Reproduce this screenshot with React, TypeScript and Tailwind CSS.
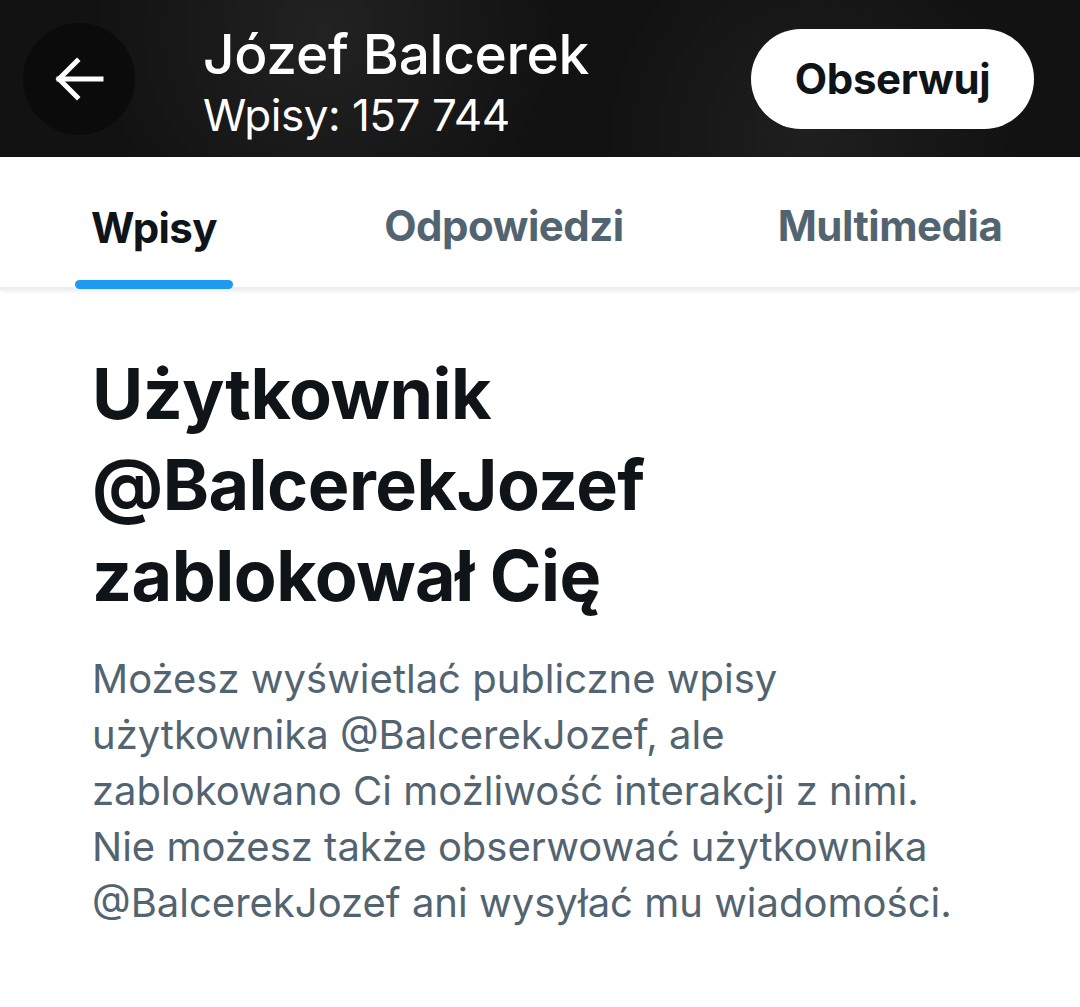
import React from "react";

export default function App() {
  const font = { fontFamily: "Inter, 'Noto Sans', sans-serif" };
  return (
    <div className="w-[1080px] h-[1007px] bg-white overflow-hidden" style={font}>
      <div className="h-[157px] bg-[#121212] bg-[radial-gradient(circle_at_30%_20%,#222_0%,transparent_30%),radial-gradient(circle_at_75%_85%,#1f1f1f_0%,transparent_25%)] flex items-center pl-[23px] pr-[46px]">
        <div className="w-[112px] h-[112px] rounded-full bg-[#0b0b0b] flex items-center justify-center shrink-0">
          <svg width="52" height="44" viewBox="0 0 52 44" fill="none" stroke="white" strokeWidth="5" strokeLinecap="square">
            <path d="M48 22H6" />
            <path d="M24 4L6 22L24 40" />
          </svg>
        </div>
        <div className="ml-[68px] flex flex-col text-white pt-[8px]">
          <div className="text-[55px] leading-[64px] font-medium tracking-[-0.3px]">Józef Balcerek</div>
          <div className="text-[44px] leading-[58px] font-normal tracking-[-0.5px]">Wpisy: 157 744</div>
        </div>
        <div className="ml-auto h-[100px] w-[283px] rounded-full bg-white flex items-center justify-center text-[#0f1419] text-[42px] font-bold tracking-[-0.3px]">
          Obserwuj
        </div>
      </div>
      <div className="h-[133px] flex border-b-[3px] border-[#eceff0] shadow-[0_2px_4px_rgba(0,0,0,0.06)]">
        <div className="w-[308px] flex flex-col items-center justify-end">
          <div className="text-[42px] font-bold text-[#0f1419] pb-[26px] leading-[52px] tracking-[-0.6px]">Wpisy</div>
          <div className="w-[158px] h-[9px] rounded-full bg-[#1d9bf0] mb-[-2px]"></div>
        </div>
        <div className="w-[392px] flex flex-col items-center justify-end">
          <div className="text-[42px] font-bold text-[#536471] pb-[35px] leading-[52px] tracking-[-0.5px]">Odpowiedzi</div>
        </div>
        <div className="flex-1 flex flex-col items-center justify-end">
          <div className="text-[42px] font-bold text-[#536471] pb-[35px] leading-[52px] tracking-[-0.5px]">Multimedia</div>
        </div>
      </div>
      <div className="pl-[92px] pr-[40px] pt-[58px]">
        <div className="text-[70px] leading-[91px] font-bold text-[#0f1419] tracking-[-0.5px]">
          Użytkownik<br />@BalcerekJozef<br />zablokował Cię
        </div>
        <div className="mt-[30px] text-[40px] leading-[56px] text-[#536471] tracking-[0px] w-[900px]">
          Możesz wyświetlać publiczne wpisy<br />użytkownika @BalcerekJozef, ale<br />zablokowano Ci możliwość interakcji z nimi.<br />Nie możesz także obserwować użytkownika<br />@BalcerekJozef ani wysyłać mu wiadomości.
        </div>
      </div>
    </div>
  );
}
